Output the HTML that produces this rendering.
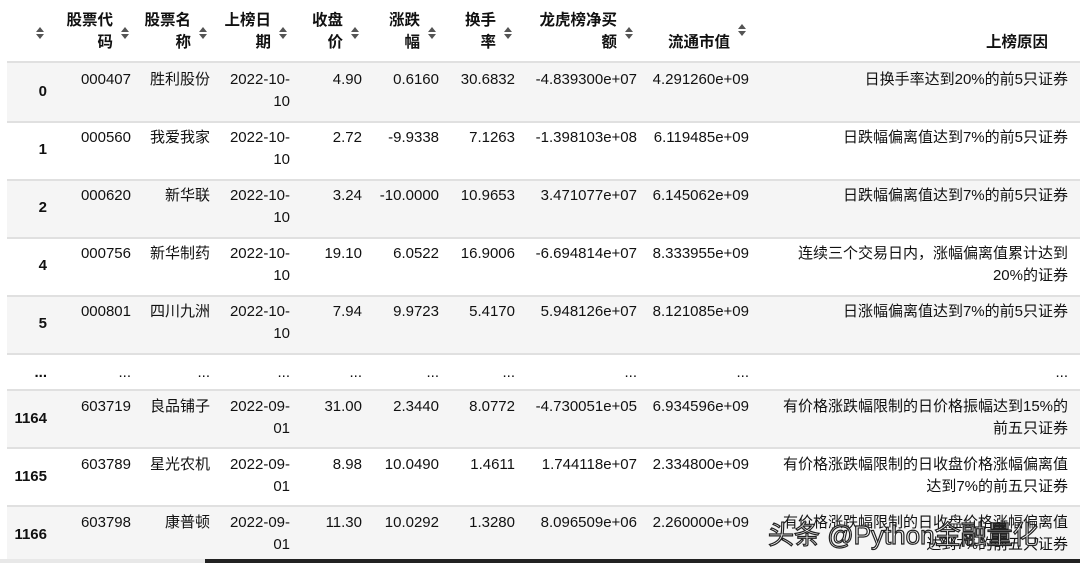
<!DOCTYPE html>
<html><head><meta charset="utf-8"><style>
body{margin:0;width:1080px;height:563px;background:#fff;overflow:hidden;position:relative;font-family:"Liberation Sans","Noto Sans CJK SC",sans-serif;font-size:15px;color:#111}
.r{position:absolute;left:7px;width:1073px}
.g{background:#f5f5f5}
.ln{position:absolute;left:7px;width:1073px;height:2px;background:#e0e0e0}
.t{position:absolute;text-align:right;line-height:22px;white-space:nowrap}
.h{font-weight:bold;font-size:15.5px}
.ic{position:absolute;width:8px;height:12px}
.ic:before{content:"";position:absolute;left:0;top:0;border-left:4px solid transparent;border-right:4px solid transparent;border-bottom:5px solid #555}
.ic:after{content:"";position:absolute;left:0;top:7px;border-left:4px solid transparent;border-right:4px solid transparent;border-top:5px solid #555}
.i{position:absolute;font-weight:bold;text-align:right;right:1033px;white-space:nowrap;line-height:22px}
</style></head><body>
<div class="ic" style="left:36px;top:27px"></div>
<div class="t h" style="right:967px;top:10px">股票代<br>码</div><div class="ic" style="left:121px;top:27px"></div>
<div class="t h" style="right:889px;top:10px">股票名<br>称</div><div class="ic" style="left:199px;top:27px"></div>
<div class="t h" style="right:809px;top:10px">上榜日<br>期</div><div class="ic" style="left:279px;top:27px"></div>
<div class="t h" style="right:737px;top:10px">收盘<br>价</div><div class="ic" style="left:351px;top:27px"></div>
<div class="t h" style="right:660px;top:10px">涨跌<br>幅</div><div class="ic" style="left:428px;top:27px"></div>
<div class="t h" style="right:584px;top:10px">换手<br>率</div><div class="ic" style="left:504px;top:27px"></div>
<div class="t h" style="right:463px;top:10px">龙虎榜净买<br>额</div><div class="ic" style="left:625px;top:27px"></div>
<div class="t h" style="right:350px;top:32px">流通市值</div><div class="ic" style="left:738px;top:24px"></div>
<div class="t h" style="right:32px;top:32px">上榜原因</div>
<div class="ln" style="top:61px"></div>

<div class="r g" style="top:63px;height:58px"></div>
<div class="ln" style="top:121px"></div>
<div class="ln" style="top:179px"></div>
<div class="r g" style="top:181px;height:56px"></div>
<div class="ln" style="top:237px"></div>
<div class="ln" style="top:295px"></div>
<div class="r g" style="top:297px;height:56px"></div>
<div class="ln" style="top:353px"></div>
<div class="ln" style="top:389px"></div>
<div class="r g" style="top:391px;height:56px"></div>
<div class="ln" style="top:447px"></div>
<div class="ln" style="top:505px"></div>
<div class="r g" style="top:507px;height:52px"></div>

<div class="i" style="top:81px">0</div>
<div class="t" style="right:949px;top:69px">000407</div><div class="t" style="right:870px;top:69px">胜利股份</div><div class="t" style="right:790px;top:69px">2022-10-<br>10</div><div class="t" style="right:718px;top:69px">4.90</div><div class="t" style="right:641px;top:69px">0.6160</div><div class="t" style="right:565px;top:69px">30.6832</div><div class="t" style="right:443px;top:69px">-4.839300e+07</div><div class="t" style="right:331px;top:69px">4.291260e+09</div><div class="t" style="right:12px;top:69px">日换手率达到20%的前5只证券</div>

<div class="i" style="top:139px">1</div>
<div class="t" style="right:949px;top:127px">000560</div><div class="t" style="right:870px;top:127px">我爱我家</div><div class="t" style="right:790px;top:127px">2022-10-<br>10</div><div class="t" style="right:718px;top:127px">2.72</div><div class="t" style="right:641px;top:127px">-9.9338</div><div class="t" style="right:565px;top:127px">7.1263</div><div class="t" style="right:443px;top:127px">-1.398103e+08</div><div class="t" style="right:331px;top:127px">6.119485e+09</div><div class="t" style="right:12px;top:127px">日跌幅偏离值达到7%的前5只证券</div>

<div class="i" style="top:197px">2</div>
<div class="t" style="right:949px;top:185px">000620</div><div class="t" style="right:870px;top:185px">新华联</div><div class="t" style="right:790px;top:185px">2022-10-<br>10</div><div class="t" style="right:718px;top:185px">3.24</div><div class="t" style="right:641px;top:185px">-10.0000</div><div class="t" style="right:565px;top:185px">10.9653</div><div class="t" style="right:443px;top:185px">3.471077e+07</div><div class="t" style="right:331px;top:185px">6.145062e+09</div><div class="t" style="right:12px;top:185px">日跌幅偏离值达到7%的前5只证券</div>

<div class="i" style="top:255px">4</div>
<div class="t" style="right:949px;top:243px">000756</div><div class="t" style="right:870px;top:243px">新华制药</div><div class="t" style="right:790px;top:243px">2022-10-<br>10</div><div class="t" style="right:718px;top:243px">19.10</div><div class="t" style="right:641px;top:243px">6.0522</div><div class="t" style="right:565px;top:243px">16.9006</div><div class="t" style="right:443px;top:243px">-6.694814e+07</div><div class="t" style="right:331px;top:243px">8.333955e+09</div><div class="t" style="right:12px;top:243px">连续三个交易日内，涨幅偏离值累计达到<br>20%的证券</div>

<div class="i" style="top:313px">5</div>
<div class="t" style="right:949px;top:301px">000801</div><div class="t" style="right:870px;top:301px">四川九洲</div><div class="t" style="right:790px;top:301px">2022-10-<br>10</div><div class="t" style="right:718px;top:301px">7.94</div><div class="t" style="right:641px;top:301px">9.9723</div><div class="t" style="right:565px;top:301px">5.4170</div><div class="t" style="right:443px;top:301px">5.948126e+07</div><div class="t" style="right:331px;top:301px">8.121085e+09</div><div class="t" style="right:12px;top:301px">日涨幅偏离值达到7%的前5只证券</div>

<div class="i" style="top:362px">...</div>
<div class="t" style="right:949px;top:362px">...</div><div class="t" style="right:870px;top:362px">...</div><div class="t" style="right:790px;top:362px">...</div><div class="t" style="right:718px;top:362px">...</div><div class="t" style="right:641px;top:362px">...</div><div class="t" style="right:565px;top:362px">...</div><div class="t" style="right:443px;top:362px">...</div><div class="t" style="right:331px;top:362px">...</div><div class="t" style="right:12px;top:362px">...</div>

<div class="i" style="top:408px">1164</div>
<div class="t" style="right:949px;top:396px">603719</div><div class="t" style="right:870px;top:396px">良品铺子</div><div class="t" style="right:790px;top:396px">2022-09-<br>01</div><div class="t" style="right:718px;top:396px">31.00</div><div class="t" style="right:641px;top:396px">2.3440</div><div class="t" style="right:565px;top:396px">8.0772</div><div class="t" style="right:443px;top:396px">-4.730051e+05</div><div class="t" style="right:331px;top:396px">6.934596e+09</div><div class="t" style="right:12px;top:396px">有价格涨跌幅限制的日价格振幅达到15%的<br>前五只证券</div>

<div class="i" style="top:466px">1165</div>
<div class="t" style="right:949px;top:454px">603789</div><div class="t" style="right:870px;top:454px">星光农机</div><div class="t" style="right:790px;top:454px">2022-09-<br>01</div><div class="t" style="right:718px;top:454px">8.98</div><div class="t" style="right:641px;top:454px">10.0490</div><div class="t" style="right:565px;top:454px">1.4611</div><div class="t" style="right:443px;top:454px">1.744118e+07</div><div class="t" style="right:331px;top:454px">2.334800e+09</div><div class="t" style="right:12px;top:454px">有价格涨跌幅限制的日收盘价格涨幅偏离值<br>达到7%的前五只证券</div>

<div class="i" style="top:524px">1166</div>
<div class="t" style="right:949px;top:512px">603798</div><div class="t" style="right:870px;top:512px">康普顿</div><div class="t" style="right:790px;top:512px">2022-09-<br>01</div><div class="t" style="right:718px;top:512px">11.30</div><div class="t" style="right:641px;top:512px">10.0292</div><div class="t" style="right:565px;top:512px">1.3280</div><div class="t" style="right:443px;top:512px">8.096509e+06</div><div class="t" style="right:331px;top:512px">2.260000e+09</div><div class="t" style="right:12px;top:512px">有价格涨跌幅限制的日收盘价格涨幅偏离值<br>达到7%的前五只证券</div>

<div style="position:absolute;left:768px;top:515px;font-size:26px;color:#fff;-webkit-text-stroke:1.2px #222;white-space:nowrap">头条 @Python金融量化</div>
<div style="position:absolute;left:0;top:559px;width:1080px;height:4px;background:#e8e8e8"></div>
<div style="position:absolute;left:205px;top:559px;width:875px;height:4px;background:#222"></div>
</body></html>
